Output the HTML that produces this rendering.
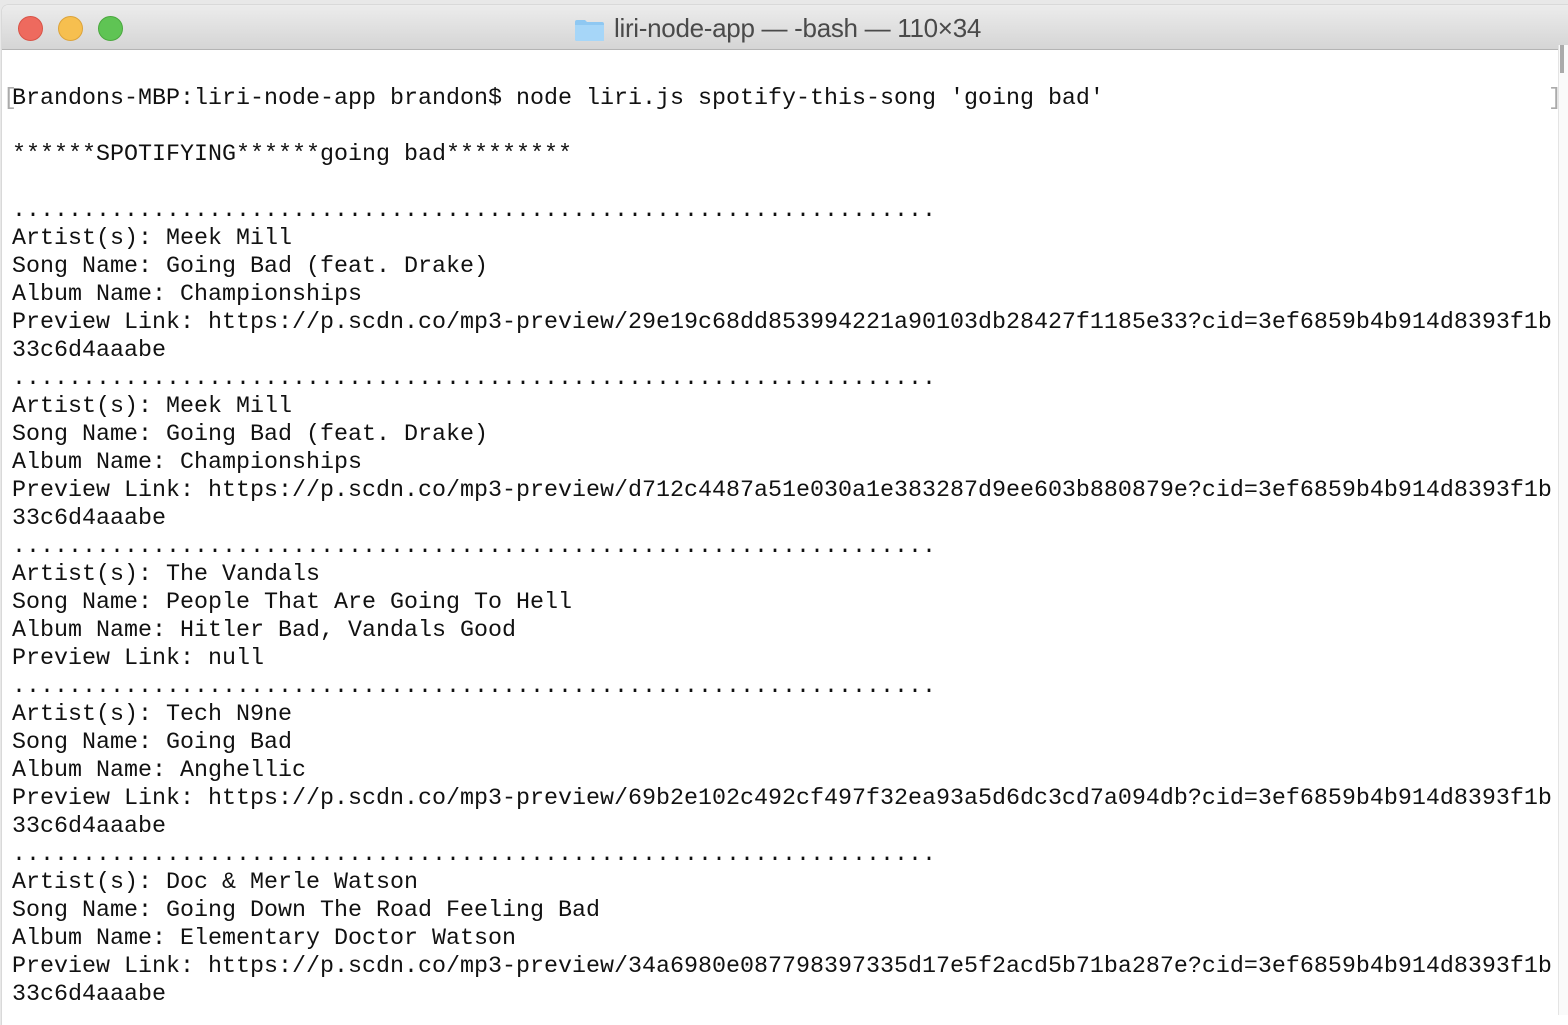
<!DOCTYPE html>
<html><head><meta charset="utf-8"><style>
html,body{margin:0;padding:0;width:1568px;height:1012px;overflow:hidden;background:#e8e8e8;}
.win{position:absolute;left:2px;top:5px;width:1580px;height:1020px;background:#fff;border-top-left-radius:6px;overflow:hidden;box-shadow:0 0 1px #888;}
.title{position:absolute;left:0;top:0;width:100%;height:44px;background:linear-gradient(#ececec,#d5d5d5);border-bottom:1px solid #b4b4b4;}
.dot{position:absolute;top:11px;width:23px;height:23px;border-radius:50%;}
.ttl{position:absolute;left:612px;top:8px;font:26px "Liberation Sans",sans-serif;color:#4a4a4a;letter-spacing:-0.3px;}
.folder{position:absolute;left:572px;top:14px;width:31px;height:23px;}
pre{position:absolute;left:12px;top:85px;margin:0;font-family:"Liberation Mono",monospace;font-size:23.33px;line-height:28px;color:#111;}
.br{color:#aaa;}
.sb{position:absolute;left:1560px;top:45px;width:4px;height:28px;background:#aaa;}
.sbt{position:absolute;left:1558px;top:45px;width:10px;height:970px;background:#fafafa;border-left:1px solid #e4e4e4;}
</style></head><body>
<div class="win">
<div class="title">
<div class="dot" style="left:16px;background:#ee6a5e;border:1px solid #d85347"></div>
<div class="dot" style="left:56px;background:#f6bf4f;border:1px solid #dca33a"></div>
<div class="dot" style="left:96px;background:#5fc454;border:1px solid #4aa83e"></div>
<svg class="folder" viewBox="0 0 31 23"><path d="M1 3 Q1 1 3 1 H11 L13 3 H28 Q30 3 30 5 V21 Q30 22 28 22 H3 Q1 22 1 20 Z" fill="#8fc8f2"/><path d="M1 6 H30 V21 Q30 22 28 22 H3 Q1 22 1 20 Z" fill="#a6d6f8"/></svg>
<div class="ttl">liri-node-app — -bash — 110×34</div>
</div>
</div>
<div class="sbt"></div>
<div class="sb"></div>
<pre><span class="br" style="position:absolute;left:-9px;">[</span>Brandons-MBP:liri-node-app brandon$ node liri.js spotify-this-song 'going bad'<span class="br" style="position:absolute;left:1536px;">]</span>

******SPOTIFYING******going bad*********

..................................................................
Artist(s): Meek Mill
Song Name: Going Bad (feat. Drake)
Album Name: Championships
Preview Link: https://p.scdn.co/mp3-preview/29e19c68dd853994221a90103db28427f1185e33?cid=3ef6859b4b914d8393f1b
33c6d4aaabe
..................................................................
Artist(s): Meek Mill
Song Name: Going Bad (feat. Drake)
Album Name: Championships
Preview Link: https://p.scdn.co/mp3-preview/d712c4487a51e030a1e383287d9ee603b880879e?cid=3ef6859b4b914d8393f1b
33c6d4aaabe
..................................................................
Artist(s): The Vandals
Song Name: People That Are Going To Hell
Album Name: Hitler Bad, Vandals Good
Preview Link: null
..................................................................
Artist(s): Tech N9ne
Song Name: Going Bad
Album Name: Anghellic
Preview Link: https://p.scdn.co/mp3-preview/69b2e102c492cf497f32ea93a5d6dc3cd7a094db?cid=3ef6859b4b914d8393f1b
33c6d4aaabe
..................................................................
Artist(s): Doc &amp; Merle Watson
Song Name: Going Down The Road Feeling Bad
Album Name: Elementary Doctor Watson
Preview Link: https://p.scdn.co/mp3-preview/34a6980e087798397335d17e5f2acd5b71ba287e?cid=3ef6859b4b914d8393f1b
33c6d4aaabe</pre>
</body></html>
